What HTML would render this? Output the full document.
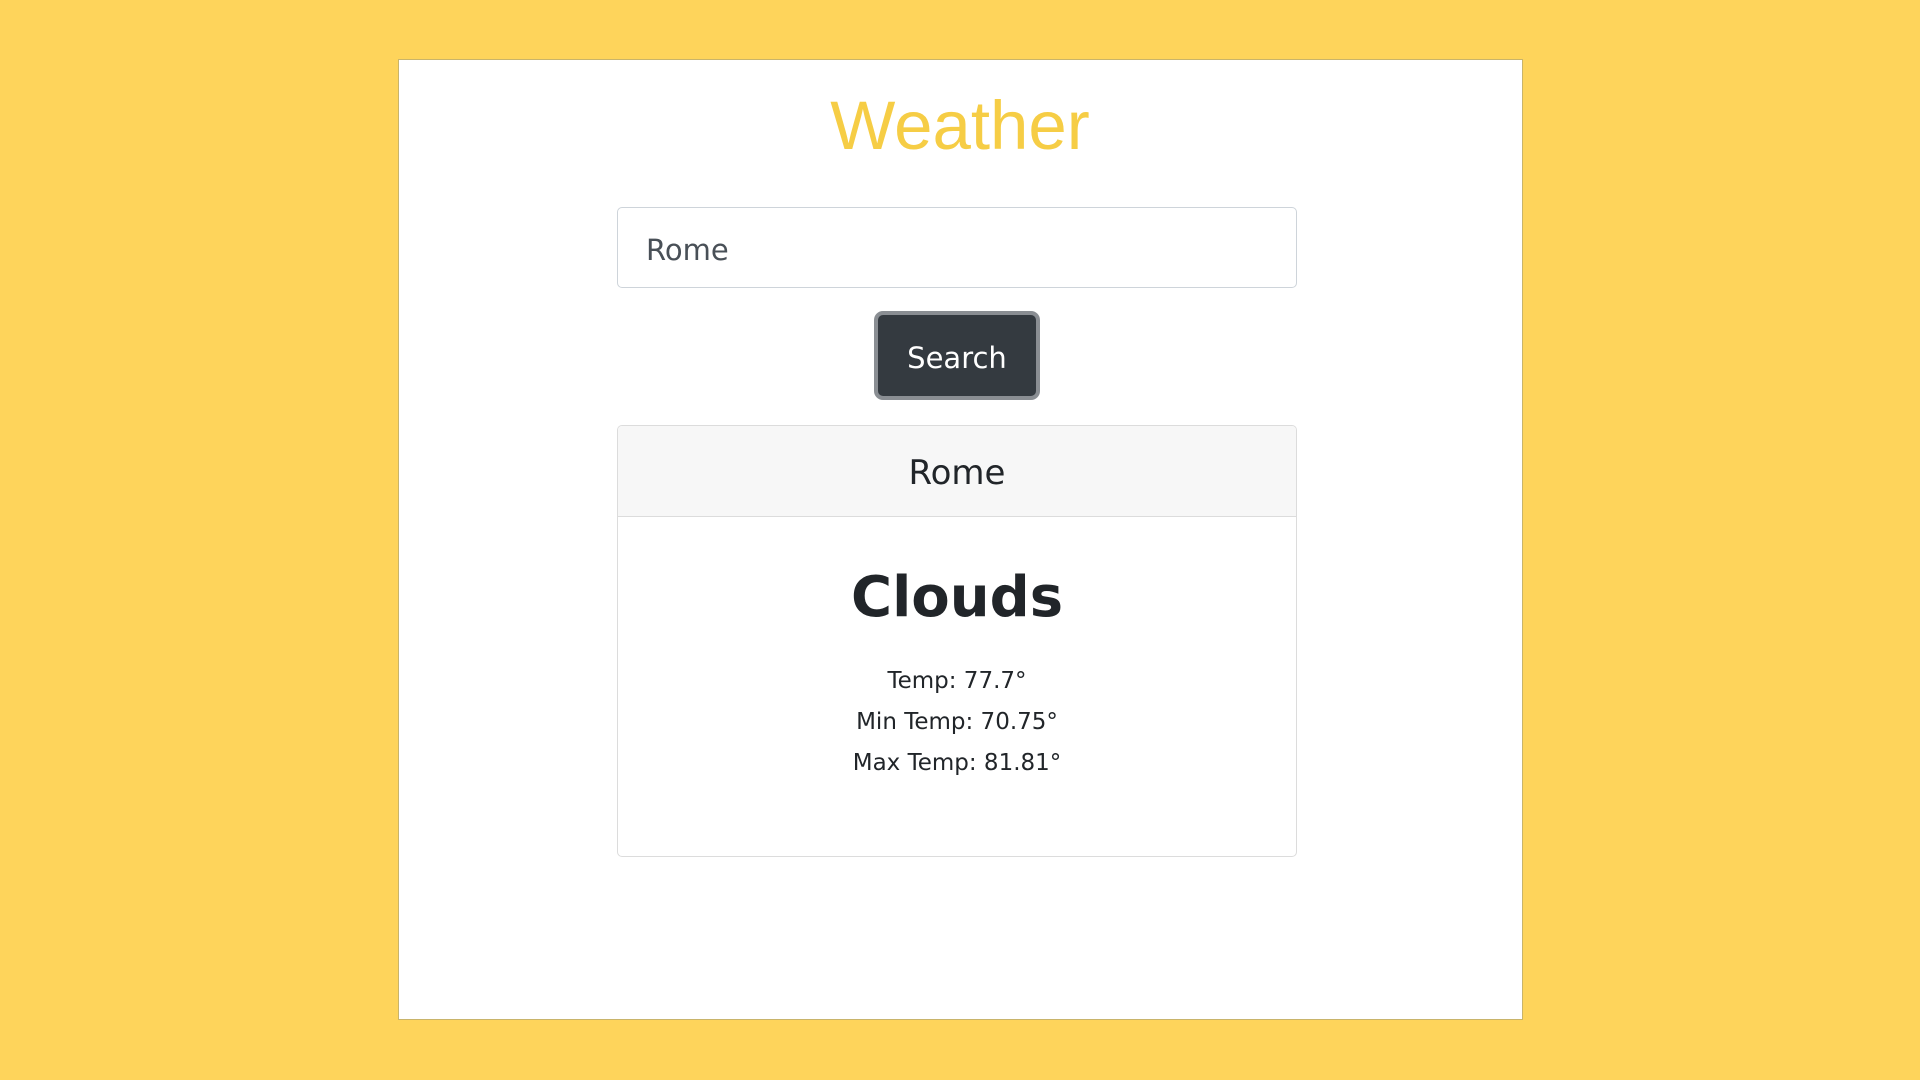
<!DOCTYPE html>
<html><head><meta charset="utf-8"><style>
body{margin:0;width:1920px;height:1080px;background:#fed45b;position:relative;font-family:"Liberation Sans",sans-serif;overflow:hidden}
.panel{position:absolute;left:398px;top:59px;width:1125px;height:961px;background:#fff;border:1px solid #c9b46a;box-sizing:border-box}
h1{position:absolute;left:0;right:0;top:86px;margin:0;text-align:center;font-weight:normal;font-size:69px;color:#f6cd45;line-height:80px}
.input{position:absolute;left:617px;top:207px;width:680px;height:81px;border:1px solid #ced4da;border-radius:5px;box-sizing:border-box;color:#495057;padding-left:28px;line-height:84px;font-family:"DejaVu Sans","Liberation Sans",sans-serif;font-size:29px}
.btn{position:absolute;left:874px;top:311px;width:166px;height:89px;background:#343a40;border:4px solid #8a8e93;border-radius:9px;box-sizing:border-box;color:#fff;font-family:"DejaVu Sans",sans-serif;font-size:29px;text-align:center;line-height:86px}
.card{position:absolute;left:617px;top:425px;width:680px;height:432px;border:1px solid #dcdcdc;border-radius:5px;box-sizing:border-box;overflow:hidden;text-align:center;color:#212529;font-family:"DejaVu Sans","Liberation Sans",sans-serif}
.hdr{height:90px;background:#f7f7f7;border-bottom:1px solid #dcdcdc;font-size:34px;line-height:94px}
.t{position:absolute;left:0;right:0;top:132px;font-size:56px;font-weight:bold;line-height:80px}
.l{position:absolute;left:0;right:0;font-size:23px;line-height:30px}
</style></head><body>
<div class="panel"></div>
<h1>Weather</h1>
<div class="input">Rome</div>
<div class="btn">Search</div>
<div class="card"><div class="hdr">Rome</div>
<div class="t">Clouds</div>
<div class="l" style="top:240px">Temp: 77.7°</div>
<div class="l" style="top:281px">Min Temp: 70.75°</div>
<div class="l" style="top:322px">Max Temp: 81.81°</div>
</div>
</body></html>
